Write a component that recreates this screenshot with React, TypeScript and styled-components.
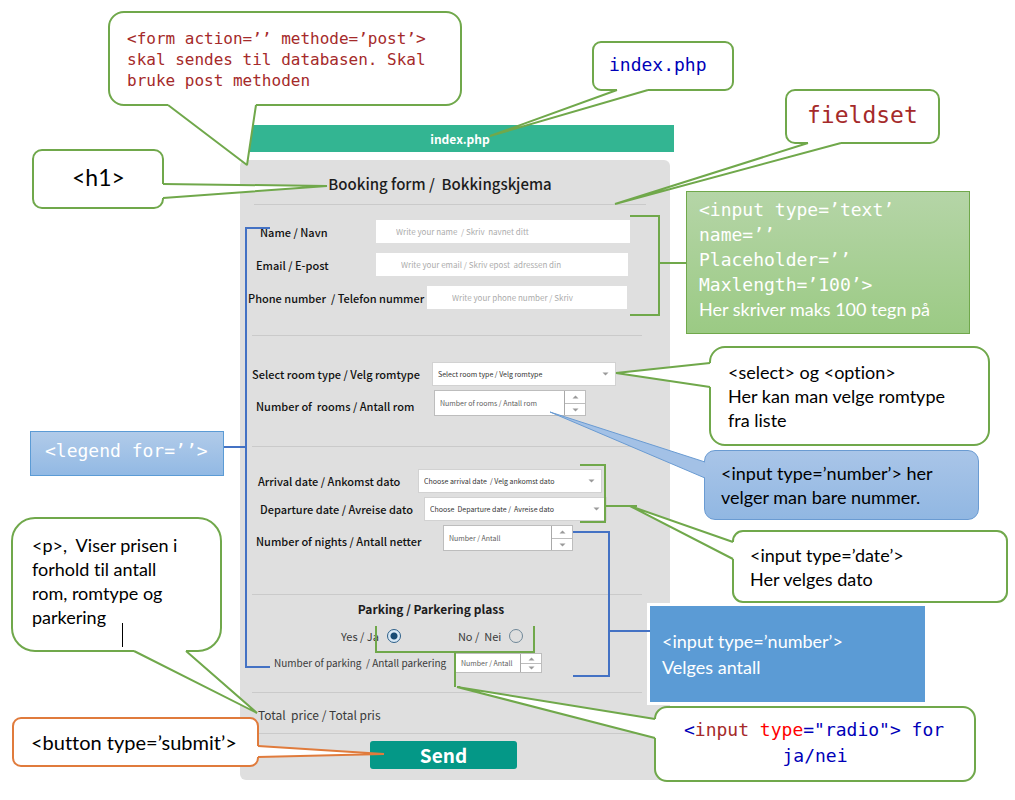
import React, { useId, useState } from "react";
import styled, { createGlobalStyle, css } from "styled-components";

const green = "#70a84b";
const blue = "#4472c4";
const orange = "#e07b3c";

const formFont = '"Noto Sans CJK SC", "Noto Sans", sans-serif';
const noteFont = 'Lato, "Open Sans", sans-serif';
const codeFont = '"DejaVu Sans Mono", "Liberation Mono", monospace';

const GlobalStyle = createGlobalStyle`
  *, *::before, *::after { box-sizing: border-box; }
  body { margin: 0; background: #fff; font-family: ${formFont}; color: #1c1c1c; }
`;

const Canvas = styled.main`
  position: relative;
  min-width: 1008px;
  padding: 125px 0 20px 240px;
`;

const Mockup = styled.div`
  width: 434px;
`;

const TitleBar = styled.header`
  margin-left: 10px;
  height: 27px;
  padding-right: 4px;
  display: flex;
  align-items: center;
  justify-content: center;
  background: #33b592;
  color: #fff;
  font-size: 12px;
  font-weight: 700;
`;

const Panel = styled.form`
  margin: 8px 4px 0 0;
  background: #dfdfdf;
  border-radius: 6px;
  padding-bottom: 11px;
`;

const Heading = styled.h1`
  margin: 0 24px 0 14px;
  height: 45px;
  padding: 3px 20px 0 0;
  display: flex;
  align-items: center;
  justify-content: center;
  border-bottom: 1px solid #cacaca;
  font-size: 15px;
  font-weight: 500;
  line-height: 24px;
  white-space: pre;
`;

const Section = styled.fieldset<{ $pad: string; $gap: number }>`
  margin: 0 28px 0 12px;
  padding: ${(p) => p.$pad};
  min-width: 0;
  border: 0;
  border-bottom: 1px solid #cacaca;
  display: flex;
  flex-direction: column;
  gap: ${(p) => p.$gap}px;
`;

const Row = styled.div<{ $indent: number; $label: number; $field: number; $align?: string }>`
  margin-left: ${(p) => p.$indent}px;
  display: grid;
  grid-template-columns: ${(p) => p.$label}px ${(p) => p.$field}px;
  align-items: ${(p) => p.$align ?? "center"};
`;

const Label = styled.label<{ $plain?: boolean }>`
  font-size: ${(p) => (p.$plain ? 10 : 11)}px;
  font-weight: ${(p) => (p.$plain ? 400 : 500)};
  line-height: 20px;
  white-space: pre;
  color: ${(p) => (p.$plain ? "#3a3a3a" : "#111")};
`;

const TextField = styled.input<{ $inset: number }>`
  width: 100%;
  height: 23px;
  padding: 0 0 0 ${(p) => p.$inset}px;
  border: 0;
  background: #fff;
  color: #333;
  font: 400 8px ${formFont};
  &::placeholder { color: #acacac; opacity: 1; }
`;

const SelectBox = styled.div`
  display: grid;
  align-items: center;
  background: #fff;
  border: 1px solid #d2d2d2;
  > * { grid-area: 1 / 1; }
  svg { justify-self: end; margin-right: 6px; pointer-events: none; }
`;

const Select = styled.select`
  appearance: none;
  width: 100%;
  height: 22px;
  padding: 0 0 0 5px;
  border: 0;
  background: transparent;
  color: #333;
  font: 400 7px ${formFont};
`;

const NumberBox = styled.div<{ $h: number }>`
  display: grid;
  grid-template-columns: 1fr 20px;
  grid-template-rows: 1fr 1fr;
  height: ${(p) => p.$h}px;
  background: #fff;
  border: 1px solid #bdbdbd;
`;

const NumberInput = styled.input`
  grid-row: 1 / 3;
  min-width: 0;
  padding: 0 0 0 5px;
  border: 0;
  border-right: 1px solid #a9a9a9;
  background: transparent;
  color: #333;
  font: 400 7px ${formFont};
  &::placeholder { color: #5c5c5c; opacity: 1; }
`;

const Step = styled.button`
  display: grid;
  place-items: center;
  min-height: 0;
  padding: 0;
  border: 0;
  background: transparent;
  & + & { border-top: 1px solid #bdbdbd; }
`;

const SubHeading = styled.legend`
  float: left;
  width: 100%;
  padding: 0 32px 0 0;
  text-align: center;
  font-size: 12px;
  font-weight: 700;
  line-height: 20px;
`;

const Radios = styled.div`
  display: flex;
  padding-left: 89px;
  gap: 57px;
`;

const RadioLabel = styled.label`
  display: flex;
  align-items: center;
  gap: 8px;
  font-size: 11px;
  line-height: 20px;
  color: #3a3a3a;
  white-space: pre;
`;

const Radio = styled.input`
  appearance: none;
  width: 14px;
  height: 14px;
  margin: 0;
  border: 1px solid #6f8798;
  border-radius: 50%;
  &:checked {
    border-color: #2d5f8a;
    background: radial-gradient(circle, #174a73 0 3px, #d8e8f5 4px);
  }
`;

const Total = styled.p`
  margin: 0 10px 0 18px;
  height: 41px;
  border-bottom: 1px solid #cacaca;
  font-size: 12px;
  line-height: 44px;
  color: #3a3a3a;
  white-space: pre;
`;

const Send = styled.button`
  display: block;
  width: 147px;
  height: 28px;
  margin: 7px 0 0 130px;
  padding: 0;
  border: 0;
  border-radius: 3px;
  background: #049887;
  color: #fff;
  font: 700 19px/28px ${formFont};
`;

type Tone = "outline" | "orange" | "green" | "sky" | "bubble" | "solid";

const tones = {
  outline: css`background: #fff; border: 2px solid ${green};`,
  orange: css`background: #fff; border: 2px solid ${orange};`,
  green: css`background: linear-gradient(#b5d5a7, #9bca84); border: 1px solid #70a84b; color: #fff;`,
  sky: css`background: linear-gradient(#b1cbe9, #92b9e4); border: 1px solid #5b9bd5; color: #fff;`,
  bubble: css`background: linear-gradient(#a9c5e8, #91b7e2); border: 1px solid #6a9bd2;`,
  solid: css`background: #5b9bd5; border: 3px solid #fff; color: #fff;`,
};

interface NoteProps {
  $x: number;
  $y: number;
  $w: number;
  $h: number;
  $pad: string;
  $tone?: Tone;
  $radius?: number;
  $code?: boolean;
  $size?: number;
  $line?: number;
}

const Note = styled.aside<NoteProps>`
  position: absolute;
  left: ${(p) => p.$x}px;
  top: ${(p) => p.$y}px;
  width: ${(p) => p.$w}px;
  min-height: ${(p) => p.$h}px;
  padding: ${(p) => p.$pad};
  border-radius: ${(p) => p.$radius ?? 0}px;
  font-family: ${(p) => (p.$code ? codeFont : noteFont)};
  font-size: ${(p) => p.$size ?? 18}px;
  font-variant-ligatures: none;
  line-height: ${(p) => p.$line ?? 24}px;
  white-space: pre;
  color: #000;
  ${(p) => tones[p.$tone ?? "outline"]}
`;

const Tint = styled.span<{ $c: string; $align?: string }>`
  color: ${(p) => p.$c};
  display: ${(p) => (p.$align ? "block" : "inline")};
  text-align: ${(p) => p.$align ?? "inherit"};
`;

const Sans = styled.span`
  font-family: ${noteFont};
`;

const Caret = styled.span`
  position: absolute;
  left: 109px;
  top: 104px;
  width: 1px;
  height: 24px;
  background: #000;
`;

const Overlay = styled.svg`
  position: absolute;
  left: 0;
  top: 0;
  pointer-events: none;
`;

type Pt = [number, number];

/* A pointer leaving a note: a and b lie on its border, `into` leads inside. */
const pointers: { a: Pt; tip: Pt; b: Pt; into: Pt; fill?: string; stroke?: string; width?: number }[] = [
  { a: [168, 105], tip: [247, 165], b: [256, 105], into: [0, -2] },
  { a: [163, 184], tip: [327, 186], b: [163, 198], into: [-2, 0] },
  { a: [617, 90], tip: [490, 136], b: [648, 90], into: [0, -2] },
  { a: [808, 143], tip: [615, 204], b: [841, 143], into: [0, -2] },
  { a: [710, 363], tip: [616, 373], b: [710, 387], into: [2, 0] },
  { a: [705, 462], tip: [550, 412], b: [705, 478], into: [1, 0], fill: "#a3c1e6", stroke: "#6a9bd2", width: 1 },
  { a: [733, 542], tip: [630, 506], b: [733, 559], into: [2, 0] },
  { a: [655, 719], tip: [457, 687], b: [655, 738], into: [2, 0] },
  { a: [134, 651], tip: [257, 713], b: [186, 651], into: [0, -2] },
  { a: [258, 746], tip: [384, 754], b: [258, 757], into: [-2, 0], stroke: orange },
];

const at = (...pts: Pt[]) => pts.map((p) => p.join(",")).join(" ");
const shift = (p: Pt, d: Pt): Pt => [p[0] + d[0], p[1] + d[1]];

function Lines() {
  return (
    <Overlay width="1008" height="800" viewBox="0 0 1008 800" fill="none" aria-hidden="true">
      <g stroke={blue} strokeWidth="2">
        <path d="M270 228H246V667H270M224 447H246" />
        <path d="M573 532H609V676H573M609 631H650" />
      </g>
      <g stroke={green} strokeWidth="2">
        <path d="M630 216H659V315H630M659 263H686" />
        <path d="M580 465H605V522H580M605 506H637" />
        <path d="M376 626V652H534V626M455 652V687" />
      </g>
      {pointers.map(({ a, tip, b, into, fill = "#fff", stroke = green, width = 2 }, i) => (
        <g key={i}>
          <polygon points={at(shift(a, into), a, tip, b, shift(b, into))} fill={fill} />
          <polyline points={at(a, tip, b)} stroke={stroke} strokeWidth={width} strokeLinejoin="bevel" />
        </g>
      ))}
    </Overlay>
  );
}

function Arrow({ up }: { up?: boolean }) {
  return (
    <svg width="7" height="4" viewBox="0 0 7 4" fill="#9a9a9a" aria-hidden="true">
      <path d={up ? "M0.5 3.5L3.5 0.5L6.5 3.5Z" : "M0.5 0.5L3.5 3.5L6.5 0.5Z"} />
    </svg>
  );
}

interface FieldProps {
  label: string;
  text: string;
  indent: number;
  labelWidth: number;
  fieldWidth: number;
}

function TextRow({ label, text, indent, labelWidth, fieldWidth, inset }: FieldProps & { inset: number }) {
  const id = useId();
  return (
    <Row $indent={indent} $label={labelWidth} $field={fieldWidth}>
      <Label htmlFor={id}>{label}</Label>
      <TextField id={id} $inset={inset} maxLength={100} placeholder={text} />
    </Row>
  );
}

function SelectRow({ label, text, indent, labelWidth, fieldWidth }: FieldProps) {
  const id = useId();
  return (
    <Row $indent={indent} $label={labelWidth} $field={fieldWidth}>
      <Label htmlFor={id}>{label}</Label>
      <SelectBox>
        <Select id={id}>
          <option>{text}</option>
        </Select>
        <Arrow />
      </SelectBox>
    </Row>
  );
}

function NumberRow({ label, text, indent, labelWidth, fieldWidth, height = 26, plain }: FieldProps & { height?: number; plain?: boolean }) {
  const id = useId();
  const [value, setValue] = useState("");
  const step = (d: number) => setValue((v) => String(Math.max(0, (Number(v) || 0) + d)));
  return (
    <Row $indent={indent} $label={labelWidth} $field={fieldWidth} $align="end">
      <Label htmlFor={id} $plain={plain}>{label}</Label>
      <NumberBox $h={height}>
        <NumberInput id={id} inputMode="numeric" placeholder={text} value={value} onChange={(e) => setValue(e.target.value)} />
        <Step type="button" aria-label="+1" onClick={() => step(1)}><Arrow up /></Step>
        <Step type="button" aria-label="-1" onClick={() => step(-1)}><Arrow /></Step>
      </NumberBox>
    </Row>
  );
}

export default function App() {
  return (
    <Canvas>
      <GlobalStyle />
      <Mockup>
        <TitleBar>index.php</TitleBar>
        <Panel onSubmit={(e) => e.preventDefault()}>
          <Heading>{"Booking form /  Bokkingskjema"}</Heading>
          <Section $pad="15px 0 26px" $gap={10}>
            <TextRow label="Name / Navn" text={"Write your name  / Skriv  navnet ditt"} indent={8} labelWidth={116} fieldWidth={254} inset={20} />
            <TextRow label="Email / E-post" text={"Write your email / Skriv epost  adressen din"} indent={4} labelWidth={120} fieldWidth={252} inset={25} />
            <TextRow label={"Phone number  / Telefon nummer"} text="Write your phone number / Skriv" indent={-4} labelWidth={179} fieldWidth={200} inset={25} />
          </Section>
          <Section $pad="26px 0 30px" $gap={4}>
            <SelectRow label="Select room type / Velg romtype" text="Select room type / Velg romtype" indent={0} labelWidth={180} fieldWidth={184} />
            <NumberRow label={"Number of  rooms / Antall rom"} text="Number of rooms / Antall rom" indent={4} labelWidth={178} fieldWidth={152} />
          </Section>
          <Section $pad="22px 0 43px" $gap={4}>
            <SelectRow label="Arrival date / Ankomst dato" text={"Choose arrival date \u00a0/ Velg ankomst dato"} indent={6} labelWidth={160} fieldWidth={184} />
            <SelectRow label="Departure date / Avreise dato" text={"Choose \u00a0Departure date / \u00a0Avreise dato"} indent={8} labelWidth={164} fieldWidth={183} />
            <NumberRow label="Number of nights / Antall netter" text="Number / Antall" indent={4} labelWidth={187} fieldWidth={130} />
          </Section>
          <Section $pad="4px 0 19px" $gap={7}>
            <SubHeading>Parking / Parkering plass</SubHeading>
            <Radios>
              <RadioLabel>
                Yes / Ja
                <Radio type="radio" name="parking" defaultChecked />
              </RadioLabel>
              <RadioLabel>
                {"No /  Nei"}
                <Radio type="radio" name="parking" />
              </RadioLabel>
            </Radios>
            <NumberRow label={"Number of parking  / Antall parkering"} text="Number / Antall" indent={22} labelWidth={181} fieldWidth={87} height={20} plain />
          </Section>
          <Total>{"Total  price / Total pris"}</Total>
          <Send type="submit">Send</Send>
        </Panel>
      </Mockup>

      <Note $x={108} $y={11} $w={354} $h={95} $pad="15px 17px 0" $radius={16} $code $size={16} $line={21}>
        <Tint $c="#a52a2a">{"<form action=’’ methode=’post’>\nskal sendes til databasen. Skal\nbruke post methoden"}</Tint>
      </Note>
      <Note $x={592} $y={41} $w={142} $h={50} $pad="10px 15px" $radius={9} $code $size={18}>
        <Tint $c="#0000b8">index.php</Tint>
      </Note>
      <Note $x={785} $y={89} $w={155} $h={55} $pad="12px 20px" $radius={10} $code $size={23}>
        <Tint $c="#a52a2a">fieldset</Tint>
      </Note>
      <Note $x={32} $y={149} $w={132} $h={60} $pad="14px 38px" $radius={10} $size={23}>{"<h1>"}</Note>
      <Note $x={686} $y={191} $w={284} $h={143} $pad="5px 12px" $tone="green" $code $line={25}>
        {"<input type=’text’\nname=’’\nPlaceholder=’’\nMaxlength=’100’>\n"}
        <Sans>Her skriver maks 100 tegn på</Sans>
      </Note>
      <Note $x={709} $y={346} $w={281} $h={99} $pad="12px 17px" $radius={16}>
        {"<select> og <option>\nHer kan man velge romtype\nfra liste"}
      </Note>
      <Note $x={704} $y={450} $w={275} $h={70} $pad="10px 16px" $radius={11} $tone="bubble">
        {"<input type=’number’> her\nvelger man bare nummer."}
      </Note>
      <Note $x={732} $y={530} $w={276} $h={71} $pad="11px 16px 10px" $radius={11}>
        {"<input type=’date’>\nHer velges dato"}
      </Note>
      <Note $x={647} $y={603} $w={281} $h={102} $pad="22px 12px" $tone="solid" $line={26}>
        {"<input type=’number’>\nVelges antall"}
      </Note>
      <Note $x={654} $y={706} $w={322} $h={76} $pad="9px 28px" $radius={13} $code $line={26}>
        <Tint $c="#0000b8">{"<"}</Tint>
        <Tint $c="#a52a2a">input</Tint>
        <Tint $c="#ff0000"> type</Tint>
        <Tint $c="#0000b8">{"=\"radio\"> for"}</Tint>
        <Tint $c="#0000b8" $align="center">ja/nei</Tint>
      </Note>
      <Note $x={30} $y={431} $w={194} $h={45} $pad="7px 14px" $tone="sky" $code>{"<legend for=’’>"}</Note>
      <Note $x={11} $y={517} $w={211} $h={135} $pad="14px 19px" $radius={24}>
        {"<p>,  Viser prisen i\nforhold til antall\nrom, romtype og\nparkering"}
        <Caret />
      </Note>
      <Note $x={12} $y={717} $w={247} $h={49} $pad="11px 17px" $radius={9} $tone="orange" $size={20}>
        {"<button type=’submit’>"}
      </Note>
      <Lines />
    </Canvas>
  );
}
